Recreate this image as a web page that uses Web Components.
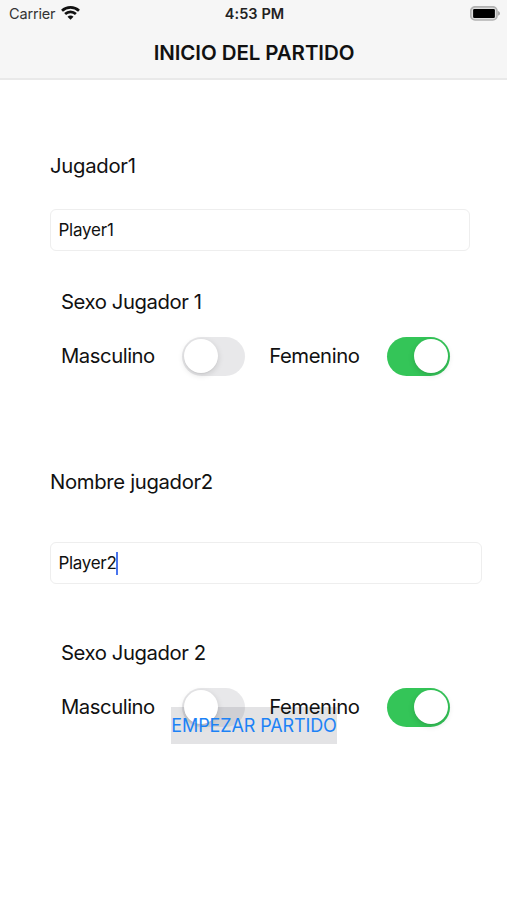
<!DOCTYPE html>
<html lang="es">
<head>
<meta charset="utf-8">
<title>Inicio del partido</title>
<style>
html, body { margin: 0; height: 100%; overflow: hidden; background: #fff; }
body { font-family: Inter, "Liberation Sans", sans-serif; color: #111; }
</style>
</head>
<body>
<match-screen></match-screen>
<script>
const define = (name, html) => customElements.define(name, class extends HTMLElement {
  constructor() {
    super();
    const t = document.createElement('template');
    t.innerHTML = html;
    this.attachShadow({ mode: 'open' }).append(t.content.cloneNode(true));
  }
});

define('status-bar', `
<style>
:host { display: grid; grid-template-columns: 1fr auto 1fr; align-items: center; height: 27px; padding: 0 7px 0 9px; font-size: 14.5px; line-height: 20px; color: #222; }
.left { display: flex; align-items: center; gap: 6px; letter-spacing: -.17px; color: #333; }
.time { font-weight: 600; letter-spacing: .08px; }
.right { display: flex; justify-content: flex-end; }
svg { display: block; }
.left svg { margin-top: -2px; }
</style>
<div class="left"><span>Carrier</span>
<svg width="19" height="15" viewBox="0 0 19 15" fill="none" stroke="#111" stroke-width="2.7">
<path d="M1 5.7C5.8 1.2 13.2 1.2 18 5.7"/><path d="M4.1 9.1c3.1-2.9 7.7-2.9 10.8 0"/>
<path d="M9.5 14.8 6.5 11.7c1.7-1.5 4.3-1.5 6 0Z" fill="#111" stroke="none"/></svg></div>
<span class="time">4:53 PM</span>
<div class="right">
<svg width="30" height="15" viewBox="0 0 30 15">
<rect x=".8" y=".8" width="26.2" height="13.2" rx="4.2" fill="#dedede" stroke="#b2b2b2" stroke-width="1.7"/>
<rect x="3.1" y="3" width="21.8" height="8.9" rx="1.2" fill="#000"/>
<path d="M28 5c3 1.1 3 3.7 0 4.8Z" fill="#aaa"/></svg></div>`);

define('nav-header', `
<style>
:host { display: block; box-sizing: border-box; height: 80px; background: #f6f6f6; border-bottom: 2px solid #e9e9e9; }
h1 { margin: 13px 0 0 1px; text-align: center; font-size: 20.5px; line-height: 26px; font-weight: 600; letter-spacing: -.09px; color: #111; }
</style>
<slot name="status"></slot><h1><slot></slot></h1>`);

define('form-label', `
<style>
:host { display: block; font-size: 20.3px; line-height: 24px; letter-spacing: var(--track, -.33px); white-space: nowrap; }
</style><slot></slot>`);

define('text-field', `
<style>
:host { display: flex; align-items: center; box-sizing: border-box; height: 42px; padding-left: 7.4px; border: 1px solid #eee; border-radius: 6px; font-size: 17px; line-height: 22px; letter-spacing: var(--track, -.2px); background: #fff; }
.caret { display: none; width: 2.5px; height: 23px; margin-left: -.8px; background: #4a75ee; }
:host([focused]) .caret { display: block; }
</style><slot></slot><span class="caret"></span>`);

define('toggle-switch', `
<style>
:host { display: flex; box-sizing: border-box; width: 62.5px; height: 38.5px; padding: 2.2px 2.2px 2.2px 1.6px; border-radius: 20px; background: rgba(120,120,132,.17); }
i { width: 34px; height: 34px; border-radius: 50%; background: #fff; box-shadow: 0 2px 6px rgba(0,0,0,.14), 0 1px 1px rgba(0,0,0,.04); }
:host([on]) { justify-content: flex-end; background: #34c558; }
</style><i></i>`);

define('sex-picker', `
<style>
:host { display: block; padding-left: 11px; --track: -.42px; }
.row { display: grid; grid-template-columns: 121px 87.2px 118px auto; align-items: center; margin-top: 23px; }
.m { --track: -.46px; } .f { --track: -.42px; }
</style>
<form-label><slot></slot></form-label>
<div class="row">
<form-label class="m">Masculino</form-label><toggle-switch></toggle-switch>
<form-label class="f">Femenino</form-label><toggle-switch on></toggle-switch>
</div>`);

define('start-button', `
<style>
:host { position: absolute; left: 171px; top: 707px; width: 166px; height: 36.5px; font-size: 18px; line-height: 38px; letter-spacing: -.12px; color: #1c82f6; text-align: center; white-space: nowrap; }
.fill { position: absolute; inset: 0; z-index: -1; background: #e3e3e5; }
.text { position: relative; z-index: 1; }
</style><div class="fill"></div><span class="text"><slot></slot></span>`);

define('match-screen', `
<style>
:host { display: block; position: relative; isolation: isolate; height: 900px; background: #fff; }
main { padding: 74px 25px 0 50px; }
.name1 { --track: -.28px; }
.field1 { margin: 31px 12px 39px 0; }
.name2 { margin-top: 94.5px; }
.field2 { --track: -.3px; margin: 48px 0 57px; }
</style>
<nav-header><status-bar slot="status"></status-bar>INICIO DEL PARTIDO</nav-header>
<main>
<form-label class="name1">Jugador1</form-label>
<text-field class="field1">Player1</text-field>
<sex-picker>Sexo Jugador 1</sex-picker>
<form-label class="name2">Nombre jugador2</form-label>
<text-field class="field2" focused>Player2</text-field>
<sex-picker>Sexo Jugador 2</sex-picker>
</main>
<start-button>EMPEZAR PARTIDO</start-button>`);
</script>
</body>
</html>
